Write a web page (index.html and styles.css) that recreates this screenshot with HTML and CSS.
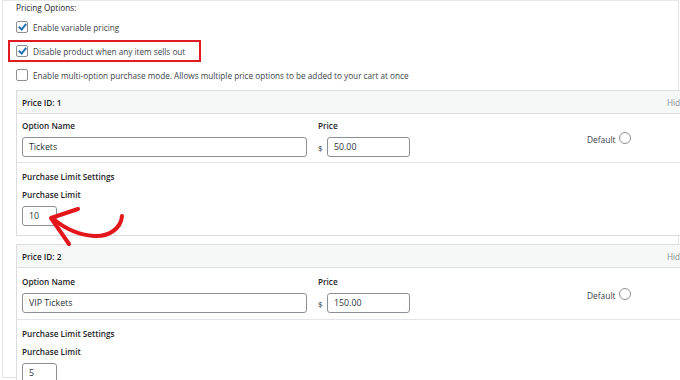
FILE: index.html
```html
<!DOCTYPE html>
<html>
<head>
<meta charset="utf-8">
<link rel="stylesheet" href="styles.css">
</head>
<body>
<div class="panel">
  <div class="section-title">Pricing Options:</div>
  <label class="check-row"><span class="cb checked"></span><span>Enable variable pricing</span></label>
  <label class="check-row highlighted"><span class="cb checked"></span><span>Disable product when any item sells out</span></label>
  <label class="check-row"><span class="cb"></span><span>Enable multi-option purchase mode. Allows multiple price options to be added to your cart at once</span></label>

  <div class="price-box">
    <div class="pb-head"><span class="pb-id">Price ID: 1</span><span class="pb-hide">Hide</span></div>
    <div class="pb-row">
      <div class="col-name">
        <div class="lbl">Option Name</div>
        <div class="inp inp-name">Tickets</div>
      </div>
      <div class="col-price">
        <div class="lbl">Price</div>
        <div class="price-line"><span class="cur">$</span><div class="inp inp-price">50.00</div></div>
      </div>
      <div class="col-default">Default <span class="radio"></span></div>
    </div>
    <div class="pb-limit">
      <div class="lbl">Purchase Limit Settings</div>
      <div class="lbl lbl2">Purchase Limit</div>
      <div class="inp inp-limit">10</div>
    </div>
  </div>

  <div class="price-box second">
    <div class="pb-head"><span class="pb-id">Price ID: 2</span><span class="pb-hide">Hide</span></div>
    <div class="pb-row">
      <div class="col-name">
        <div class="lbl">Option Name</div>
        <div class="inp inp-name">VIP Tickets</div>
      </div>
      <div class="col-price">
        <div class="lbl">Price</div>
        <div class="price-line"><span class="cur">$</span><div class="inp inp-price">150.00</div></div>
      </div>
      <div class="col-default">Default <span class="radio"></span></div>
    </div>
    <div class="pb-limit">
      <div class="lbl">Purchase Limit Settings</div>
      <div class="lbl lbl2">Purchase Limit</div>
      <div class="inp inp-limit">5</div>
    </div>
  </div>
</div>

<svg class="arrow" width="680" height="380" viewBox="0 0 680 380">
  <path d="M122,216 C121,229 108,237 94,236 C78,235 64,228 52,218" fill="none" stroke="#e3161c" stroke-width="4" stroke-linecap="round"/>
  <path d="M78,209 L51,218 L69,244" fill="none" stroke="#e3161c" stroke-width="4" stroke-linecap="round" stroke-linejoin="round"/>
</svg>
</body>
</html>
```
FILE: styles.css
```css
html, body {
  margin: 0;
  padding: 0;
  background: #ffffff;
  overflow: hidden;
  width: 680px;
  height: 380px;
}
body {
  position: relative;
  font-family: "Open Sans", "Noto Sans", sans-serif;
  font-size: 8.2px;
  color: #2c3338;
}
.panel {
  margin-left: 2px;
  width: 677px;
  height: 378px;
  border: 1px solid #e2e4e7;
  border-top-color: #e6e7e9;
  padding-left: 13px;
  box-sizing: border-box;
  overflow: visible;
}
.section-title {
  height: 12px;
  line-height: 12px;
  margin-top: 1px;
  color: #1d2327;
}
.check-row {
  display: flex;
  align-items: center;
  gap: 5px;
  height: 24px;
  color: #3c434a;
}
.check-row:first-of-type { margin-top: 1px; }
.highlighted {
  position: relative;
}
.highlighted::before {
  content: "";
  position: absolute;
  left: -8px;
  top: 1px;
  width: 189px;
  height: 18px;
  border: 2px solid #e11b22;
}
.cb {
  width: 10px;
  height: 10px;
  border: 1px solid #8c8f94;
  border-radius: 2px;
  background: #fff;
  position: relative;
  flex: none;
}
.cb.checked::after {
  content: "";
  position: absolute;
  left: 3px;
  top: 0px;
  width: 3px;
  height: 6px;
  border-right: 2px solid #2271b1;
  border-bottom: 2px solid #2271b1;
  transform: rotate(40deg);
}
.price-box {
  margin-top: 3px;
  width: 690px;
  border: 1px solid #dcdcde;
  background: #fff;
  position: relative;
}
.price-box.second { margin-top: 8px; }
.price-box.second .pb-row { padding-top: 8px; padding-bottom: 6px; }
.pb-head {
  height: 22px;
  background: #f6f7f7;
  border-bottom: 1px solid #dcdcde;
  display: flex;
  align-items: center;
  padding: 0 0 0 5px;
}
.pb-id {
  font-weight: 600;
  color: #1d2327;
  flex: 1;
}
.pb-hide {
  color: #8c8f94;
  width: 40px;
}
.lbl {
  font-weight: 600;
  color: #1d2327;
  height: 12px;
  line-height: 12px;
}
.pb-row {
  display: flex;
  padding: 6px 0 5px 5px;
  border-bottom: 1px solid #e2e4e7;
}
.col-name {
  width: 285px;
  display: flex;
  flex-direction: column;
  gap: 5px;
}
.col-price {
  margin-left: 11px;
  display: flex;
  flex-direction: column;
  gap: 5px;
}
.price-line {
  display: flex;
  align-items: center;
}
.cur {
  width: 9px;
  font-size: 8px;
}
.inp {
  height: 18px;
  border: 1px solid #8c8f94;
  border-radius: 3px;
  display: flex;
  align-items: center;
  padding-left: 6px;
  box-sizing: content-box;
  color: #2c3338;
  font-size: 8.8px;
}
.inp-name { width: 277px; }
.inp-price { width: 75px; }
.col-default {
  margin-left: 177px;
  margin-top: 13px;
  display: flex;
  align-items: center;
  gap: 3px;
  height: 12px;
  color: #3c434a;
  font-size: 8.4px;
}
.radio {
  width: 10px;
  height: 10px;
  border: 1px solid #8c8f94;
  border-radius: 50%;
  margin-top: -3px;
}
.pb-limit {
  padding: 8px 0 9px 5px;
  display: flex;
  flex-direction: column;
}
.lbl2 { margin-top: 6px; }
.inp-limit {
  width: 27px;
  margin-top: 5px;
}
.arrow {
  position: absolute;
  left: 0;
  top: 0;
  pointer-events: none;
}
```
